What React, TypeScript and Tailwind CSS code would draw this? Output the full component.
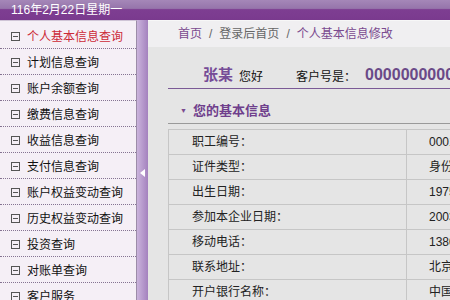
import React from "react";

const menu = [
  "个人基本信息查询",
  "计划信息查询",
  "账户余额查询",
  "缴费信息查询",
  "收益信息查询",
  "支付信息查询",
  "账户权益变动查询",
  "历史权益变动查询",
  "投资查询",
  "对账单查询",
  "客户服务",
];

const rows: [string, string][] = [
  ["职工编号：", "00012345"],
  ["证件类型：", "身份证"],
  ["出生日期：", "1975-06-12"],
  ["参加本企业日期：", "2003-07-01"],
  ["移动电话：", "13800000000"],
  ["联系地址：", "北京市朝阳区"],
  ["开户银行名称：", "中国工商银行"],
];

function MinusBox() {
  return (
    <span className="relative w-[9px] h-[9px] border border-[#555] shrink-0">
      <span className="absolute left-[1px] right-[1px] top-[3px] h-px bg-[#555]" />
    </span>
  );
}

export default function App() {
  return (
    <div className="w-[450px] h-[300px] overflow-hidden flex flex-col bg-[#e5e5e5] font-['Liberation_Sans','Noto_Sans_CJK_SC',sans-serif] text-[12px] leading-[16px]">
      {/* top bar with date */}
      <div className="h-[20px] shrink-0 flex items-center pl-[11px] text-white bg-[linear-gradient(#a587b8_0,#9675ab_42%,#7e3e92_48%,#7a3a8e_100%)]">
        116年2月22日星期一
      </div>

      <div className="flex flex-1 min-h-0">
        {/* left menu */}
        <div className="w-[137px] shrink-0 bg-[#f5eff6] border-r border-[#9c8ca8] border-t border-t-[#cfc4d6] pt-[2px]">
          {menu.map((m, i) => (
            <div
              key={m}
              className="h-[26px] flex items-center pt-[2px] pl-[11px] border-b border-dotted border-[#857392]"
            >
              <MinusBox />
              <span className={"ml-[7px] whitespace-nowrap " + (i === 0 ? "text-[#cc2a36]" : "text-[#111]")}>
                {m}
              </span>
            </div>
          ))}
        </div>

        {/* collapse bar */}
        <div className="w-[11px] shrink-0 flex items-center bg-linear-to-r from-[#cbb4dc] to-[#a482be]">
          <span className="ml-[3px] mt-[26px] w-0 h-0 border-y-[4px] border-y-transparent border-r-[5px] border-r-white" />
        </div>

        {/* main */}
        <div className="flex-1 min-w-0 overflow-hidden">
          <div className="h-[27px] flex items-center pl-[30px] bg-[#f0eff1] border-t border-[#f7f7f7] whitespace-nowrap">
            <span className="text-[#7a4a8f]">首页</span>
            <span className="text-[#666] mx-[7px]">/</span>
            <span className="text-[#666]">登录后首页</span>
            <span className="text-[#666] mx-[7px]">/</span>
            <span className="text-[#7a4a8f]">个人基本信息修改</span>
          </div>

          <div className="pl-[20px]">
            <div className="w-[400px] h-[42px] flex items-end pb-[3px] pl-[35px] border-b border-[#7b5a96] whitespace-nowrap">
              <span className="text-[15px] leading-[20px] font-bold text-[#764c97]">张某</span>
              <span className="ml-[6px] text-[#111]">您好</span>
              <span className="ml-[33px] text-[#111]">客户号是：</span>
              <span className="ml-[9px] text-[16px] leading-[20px] font-bold text-[#6a4a88]">0000000000</span>
            </div>

            <div className="w-[400px] pt-[14px] pb-[4px] pl-[12px] flex items-center border-b border-[#9a9a9a]">
              <span className="text-[7px] leading-[16px] text-[#7a4a8f]">▼</span>
              <span className="ml-[6px] text-[13px] font-bold text-[#6f3f8c]">您的基本信息</span>
            </div>

            <div className="mt-[5px] w-[400px] border-t border-l border-[#c6c6c6]">
              {rows.map(([k, v]) => (
                <div key={k} className="h-[25px] flex border-b border-[#c6c6c6]">
                  <div className="w-[238px] shrink-0 flex items-center pl-[23px] border-r border-[#c6c6c6] text-[#222]">
                    {k}
                  </div>
                  <div className="flex items-center pl-[22px] text-[#222] whitespace-nowrap">{v}</div>
                </div>
              ))}
            </div>
          </div>
        </div>
      </div>
    </div>
  );
}
